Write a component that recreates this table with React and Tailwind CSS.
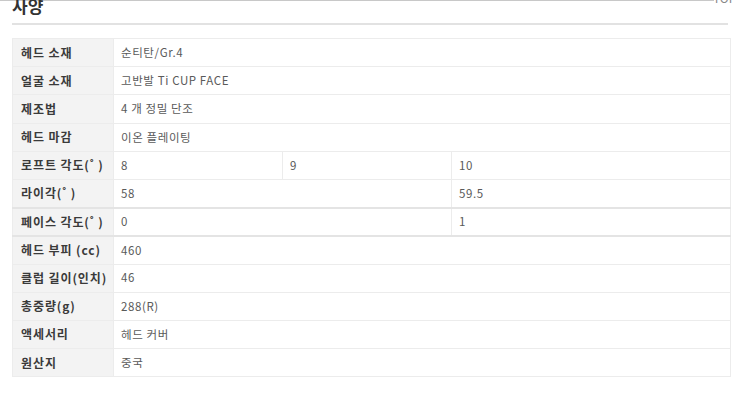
const rows = [
  { label: "헤드 소재", cells: [{ v: "순티탄/Gr.4", span: 3 }] },
  { label: "얼굴 소재", cells: [{ v: "고반발 Ti CUP FACE", span: 3 }] },
  { label: "제조법", cells: [{ v: "4 개 정밀 단조", span: 3 }] },
  { label: "헤드 마감", cells: [{ v: "이온 플레이팅", span: 3 }] },
  { label: "로프트 각도(˚ )", cells: [{ v: "8" }, { v: "9" }, { v: "10" }] },
  { label: "라이각(˚ )", cells: [{ v: "58", span: 2 }, { v: "59.5" }] },
  { label: "페이스 각도(˚ )", cells: [{ v: "0", span: 2 }, { v: "1" }], dark: true },
  { label: "헤드 부피 (cc)", cells: [{ v: "460", span: 3 }], dark: true },
  { label: "클럽 길이(인치)", cells: [{ v: "46", span: 3 }] },
  { label: "총중량(g)", cells: [{ v: "288(R)", span: 3 }] },
  { label: "액세서리", cells: [{ v: "헤드 커버", span: 3 }] },
  { label: "원산지", cells: [{ v: "중국", span: 3 }] },
];

export default function App() {
  return (
    <div
      className="relative h-[394px] w-[740px] overflow-hidden bg-white"
      style={{ fontFamily: '"Noto Sans CJK KR", "Noto Sans", sans-serif' }}
    >
      <div className="flex items-start">
        <div className="h-px w-[714px] bg-[#c8c8c8]" />
        <span className="-mt-[9px] ml-[-1px] text-[12px] leading-[14px] text-[#888]">TOP</span>
      </div>
      <div className="mx-[12px] -mt-[9px] border-b-2 border-[#e2e2e2] pb-[7px]">
        <h2 className="text-[17px] font-bold leading-[20px] text-[#333]">사양</h2>
      </div>

      <table className="ml-[12px] mt-[13px] w-[719px] border-collapse">
        <colgroup>
          <col className="w-[101px]" />
          <col className="w-[169px]" />
          <col className="w-[169px]" />
          <col />
        </colgroup>
        <tbody>
          {rows.map((r) => (
            <tr key={r.label} className={r.dark ? "border-t-2 border-[#e4e4e4]" : ""}>
              <th className="h-[28.2px] whitespace-nowrap border border-[#ececec] bg-[#f3f3f3] pl-[8px] text-left text-[12px] font-bold tracking-[0.9px] text-[#3a3a3a]">
                {r.label}
              </th>
              {r.cells.map((c, i) => (
                <td
                  key={i}
                  colSpan={c.span || 1}
                  className="h-[28.2px] border border-[#ececec] pl-[7px] text-[11.5px] tracking-[0.6px] text-[#5a5a5a]"
                >
                  {c.v}
                </td>
              ))}
            </tr>
          ))}
        </tbody>
      </table>
    </div>
  );
}
